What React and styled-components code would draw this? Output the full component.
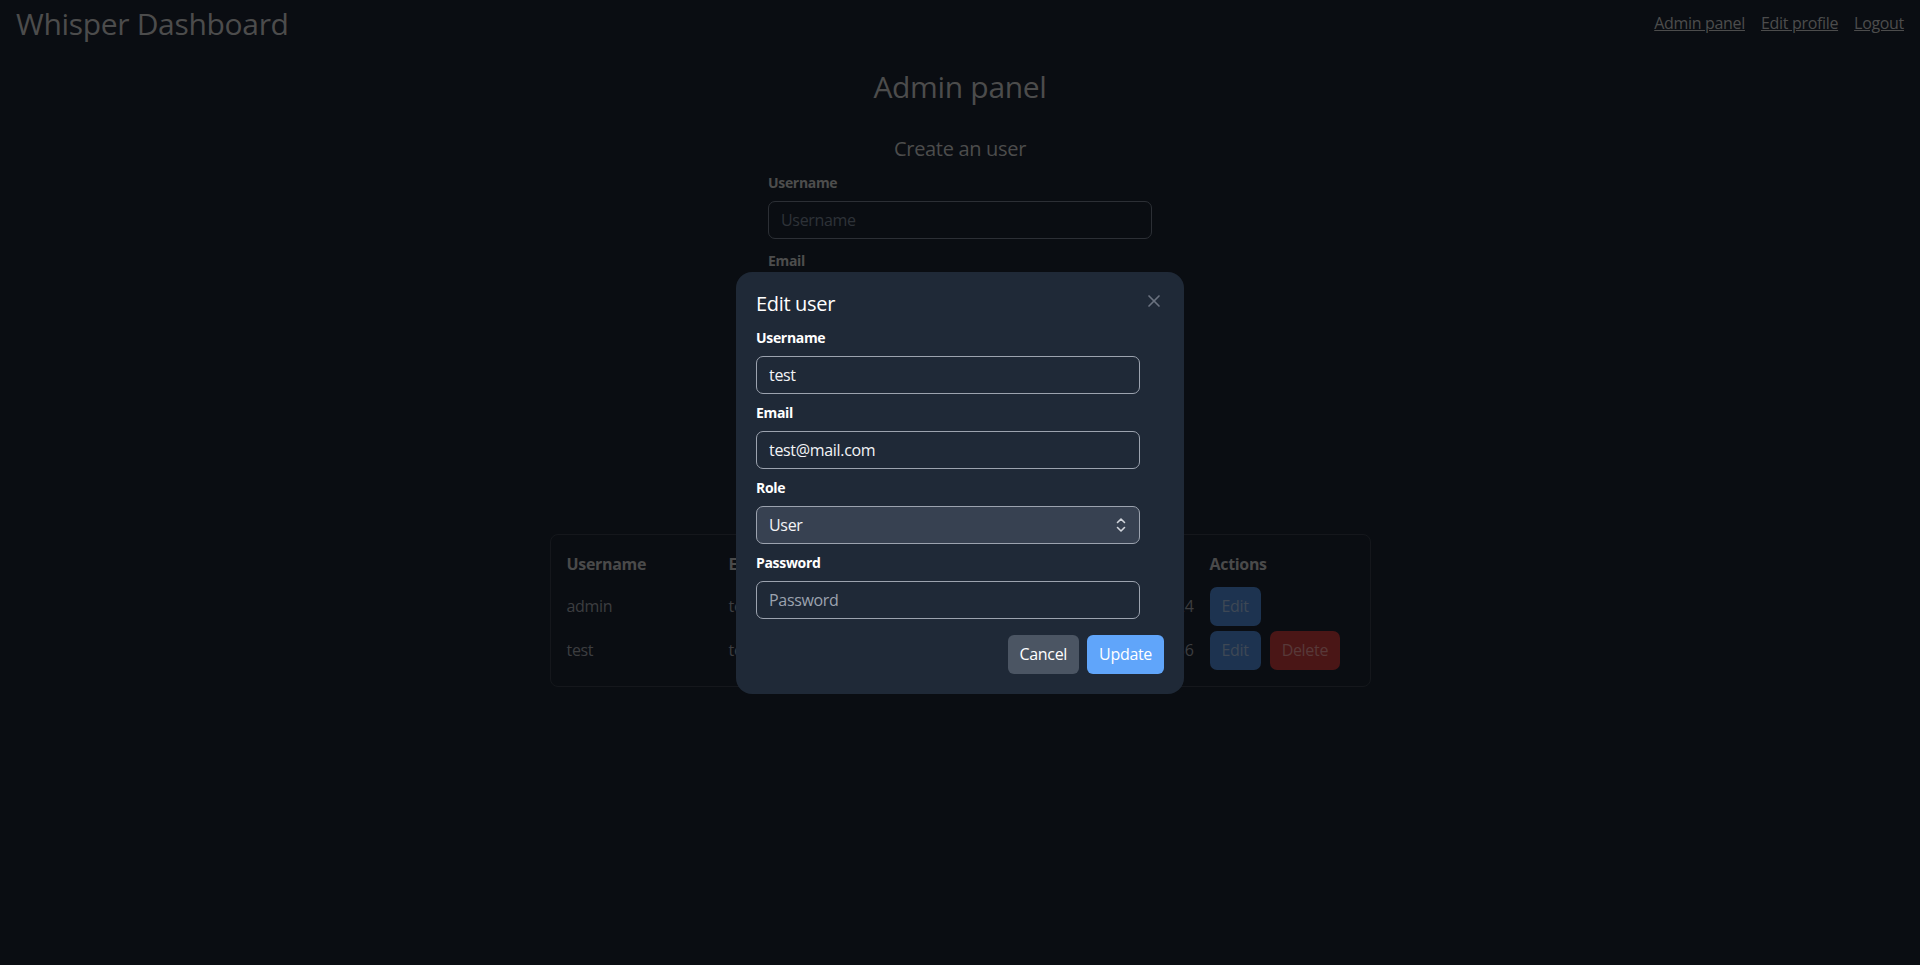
import React from 'react';
import styled, { createGlobalStyle } from 'styled-components';

const GlobalStyle = createGlobalStyle`
  html, body {
    margin: 0;
    padding: 0;
    background-color: #141a24;
  }
  body {
    font-family: "Segoe UI", "Open Sans", sans-serif;
    letter-spacing: -0.02em;
    color: #989898;
  }
  * { box-sizing: border-box; }
  input, select, button { letter-spacing: inherit; }
`;

const Page = styled.div`
  min-height: 100vh;
  background-color: #141a24;
`;

const Header = styled.header`
  height: 48px;
  padding: 0 16px;
  display: flex;
  align-items: center;
  justify-content: space-between;
`;

const Brand = styled.h1`
  margin: 0;
  font-size: 30px;
  line-height: 36px;
  font-weight: 400;
  color: #989898;
`;

const Nav = styled.nav`
  display: flex;
  gap: 16px;
  margin-top: -3px;
`;

const NavLink = styled.a`
  font-size: 16px;
  line-height: 24px;
  color: #989898;
  text-decoration: underline;
  cursor: pointer;
`;

const Main = styled.main`
  display: flex;
  flex-direction: column;
  align-items: center;
  padding-top: 21px;
`;

const PageTitle = styled.h2`
  margin: 0 0 30px;
  font-size: 30px;
  line-height: 36px;
  font-weight: 400;
  color: #989898;
`;

const SectionTitle = styled.h3`
  margin: 0 0 10px;
  font-size: 20px;
  line-height: 28px;
  font-weight: 400;
  color: #989898;
`;

const CreateForm = styled.form`
  width: 384px;
  display: flex;
  flex-direction: column;
  gap: 12px;
`;

const Field = styled.div`
  display: flex;
  flex-direction: column;
  width: 100%;
  max-width: 384px;
`;

const Label = styled.label`
  font-size: 14px;
  line-height: 20px;
  font-weight: 700;
  margin-bottom: 8px;
  color: ${p => (p.$dim ? '#9a9a9a' : '#ffffff')};
`;

const Input = styled.input`
  width: 100%;
  height: 38px;
  padding: 6px 12px;
  font-family: inherit;
  font-size: 16px;
  line-height: 24px;
  border-radius: 7px;
  outline: none;
  background: transparent;
  border: 1px solid ${p => (p.$dim ? '#585f6b' : '#9ca3af')};
  color: ${p => (p.$dim ? '#989898' : '#f3f4f6')};

  &::placeholder {
    color: ${p => (p.$dim ? '#5c6470' : '#9ca3af')};
    opacity: 1;
  }
`;

const SelectWrap = styled.div`
  position: relative;
  width: 100%;
`;

const Select = styled.select`
  width: 100%;
  height: 38px;
  padding: 6px 12px;
  font-family: inherit;
  font-size: 16px;
  line-height: 24px;
  border-radius: 7px;
  appearance: none;
  outline: none;
  border: 1px solid ${p => (p.$dim ? '#585f6b' : '#9ca3af')};
  background-color: ${p => (p.$dim ? 'transparent' : '#374151')};
  color: ${p => (p.$dim ? '#989898' : '#f3f4f6')};
`;

const SelectIcon = styled.span`
  position: absolute;
  right: 14px;
  top: 11px;
  display: flex;
  pointer-events: none;
  color: #d1d5db;
`;

const CreateButton = styled.button`
  margin-top: 4px;
  height: 40px;
  border: none;
  border-radius: 6px;
  font-family: inherit;
  font-size: 16px;
  background: #3a66a0;
  color: #cfd8e6;
`;

const TableCard = styled.div`
  width: 821px;
  margin-top: 5px;
  border: 1px solid #2a2f38;
  border-radius: 8px;
  padding: 9px 8px 14px;
`;

const Table = styled.table`
  width: 100%;
  border-collapse: collapse;
  table-layout: fixed;
`;

const Th = styled.th`
  text-align: left;
  padding: 8px;
  font-size: 16px;
  line-height: 24px;
  font-weight: 700;
  color: #949494;
  white-space: nowrap;
`;

const Td = styled.td`
  padding: 2.5px 8px;
  font-size: 16px;
  line-height: 24px;
  color: #787b80;
  white-space: nowrap;
  overflow: hidden;
  text-align: ${p => p.$align || 'left'};
`;

const Actions = styled.div`
  display: flex;
  gap: 9px;
`;

const RowButton = styled.button`
  padding: 7.5px 12px;
  border: none;
  border-radius: 7px;
  font-family: inherit;
  font-size: 16px;
  line-height: 24px;
  background: ${p => (p.$danger ? '#952c2c' : '#3a66a0')};
  color: ${p => (p.$danger ? '#b07272' : '#7c90aa')};
`;

const Overlay = styled.div`
  position: fixed;
  inset: 0;
  background: rgba(0, 0, 0, 0.5);
  display: flex;
  align-items: center;
  justify-content: center;
`;

const Dialog = styled.div`
  width: 448px;
  background: #1f2937;
  border-radius: 16px;
  padding: 20px;
  display: flex;
  flex-direction: column;
`;

const DialogHead = styled.div`
  display: flex;
  justify-content: space-between;
  align-items: flex-start;
  margin-bottom: 8px;
`;

const DialogTitle = styled.h3`
  margin: -2px 0 2px;
  font-size: 20px;
  line-height: 28px;
  font-weight: 400;
  color: #ffffff;
`;

const CloseButton = styled.button`
  width: 20px;
  height: 20px;
  margin-top: -1px;
  padding: 0;
  border: none;
  background: none;
  color: #6b7280;
  display: flex;
  align-items: center;
  justify-content: center;
  cursor: pointer;
`;

const DialogFields = styled.div`
  display: flex;
  flex-direction: column;
  gap: 9px;
`;

const DialogFooter = styled.div`
  display: flex;
  justify-content: flex-end;
  gap: 8px;
  margin-top: 16px;
`;

const FooterButton = styled.button`
  height: 39px;
  padding: 0 12px;
  border: none;
  border-radius: 6px;
  font-family: inherit;
  font-size: 16px;
  line-height: 24px;
  color: #ffffff;
  background: ${p => (p.$primary ? '#60a5fa' : '#4b5563')};
  cursor: pointer;
`;

const ChevronsUpDown = () => (
  <svg width="10" height="16" viewBox="0 0 10 16" fill="none" stroke="currentColor" strokeWidth="1.6" strokeLinecap="round" strokeLinejoin="round">
    <path d="M1.5 5.5 5 2l3.5 3.5" />
    <path d="M1.5 10.5 5 14l3.5-3.5" />
  </svg>
);

const users = [
  { username: 'admin', email: 'test@admin.com', role: 'admin', created: '11/06/2024, 10:15:24', canDelete: false },
  { username: 'test', email: 'test@mail.com', role: 'user', created: '11/06/2024, 10:16:36', canDelete: true },
];

const App = () => {
  return (
    <Page>
      <GlobalStyle />
      <Header>
        <Brand>Whisper Dashboard</Brand>
        <Nav>
          <NavLink>Admin panel</NavLink>
          <NavLink>Edit profile</NavLink>
          <NavLink>Logout</NavLink>
        </Nav>
      </Header>

      <Main>
        <PageTitle>Admin panel</PageTitle>
        <SectionTitle>Create an user</SectionTitle>
        <CreateForm onSubmit={e => e.preventDefault()}>
          <Field>
            <Label $dim>Username</Label>
            <Input $dim placeholder="Username" />
          </Field>
          <Field>
            <Label $dim>Email</Label>
            <Input $dim placeholder="Email" />
          </Field>
          <Field>
            <Label $dim>Password</Label>
            <Input $dim type="password" placeholder="Password" />
          </Field>
          <Field>
            <Label $dim>Role</Label>
            <Select $dim defaultValue="user">
              <option value="user">User</option>
              <option value="admin">Admin</option>
            </Select>
          </Field>
          <CreateButton type="submit">Create</CreateButton>
        </CreateForm>

        <TableCard>
          <Table>
            <colgroup>
              <col style={{ width: 162 }} />
              <col style={{ width: 180 }} />
              <col style={{ width: 100 }} />
              <col style={{ width: 201 }} />
              <col style={{ width: 160 }} />
            </colgroup>
            <thead>
              <tr>
                <Th>Username</Th>
                <Th>Email</Th>
                <Th>Role</Th>
                <Th>Created at</Th>
                <Th>Actions</Th>
              </tr>
            </thead>
            <tbody>
              {users.map(u => (
                <tr key={u.username}>
                  <Td>{u.username}</Td>
                  <Td>{u.email}</Td>
                  <Td>{u.role}</Td>
                  <Td $align="right">{u.created}</Td>
                  <Td>
                    <Actions>
                      <RowButton>Edit</RowButton>
                      {u.canDelete && <RowButton $danger>Delete</RowButton>}
                    </Actions>
                  </Td>
                </tr>
              ))}
            </tbody>
          </Table>
        </TableCard>
      </Main>

      <Overlay>
        <Dialog>
          <DialogHead>
            <DialogTitle>Edit user</DialogTitle>
            <CloseButton aria-label="Close">
              <svg width="20" height="20" viewBox="0 0 24 24" fill="none" stroke="currentColor" strokeWidth="2" strokeLinecap="round">
                <path d="M18 6 6 18" />
                <path d="m6 6 12 12" />
              </svg>
            </CloseButton>
          </DialogHead>
          <DialogFields>
            <Field>
              <Label>Username</Label>
              <Input defaultValue="test" />
            </Field>
            <Field>
              <Label>Email</Label>
              <Input defaultValue="test@mail.com" />
            </Field>
            <Field>
              <Label>Role</Label>
              <SelectWrap>
                <Select defaultValue="user">
                  <option value="user">User</option>
                  <option value="admin">Admin</option>
                </Select>
                <SelectIcon>
                  <ChevronsUpDown />
                </SelectIcon>
              </SelectWrap>
            </Field>
            <Field>
              <Label>Password</Label>
              <Input type="password" placeholder="Password" />
            </Field>
          </DialogFields>
          <DialogFooter>
            <FooterButton>Cancel</FooterButton>
            <FooterButton $primary>Update</FooterButton>
          </DialogFooter>
        </Dialog>
      </Overlay>
    </Page>
  );
};

export default App;
